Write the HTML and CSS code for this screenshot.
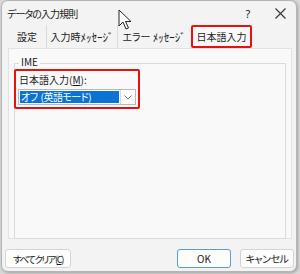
FILE: index.html
```html
<html>
  <head>
    <link rel="stylesheet" href="styles.css">
  </head>
  <body>
    <div class="dialog">
      <div class="titlebar">
        <span class="title">データの入力規則</span>
        <span class="help">?</span>
        <span class="close">
          <svg width="11" height="11" viewBox="0 0 11 11"><path d="M0.5 0.5 L10.5 10.5 M10.5 0.5 L0.5 10.5" stroke="#333" stroke-width="1.1"/></svg>
        </span>
      </div>

      <div class="tabs">
        <div class="tab t1">設定</div>
        <div class="tab t2">入力時<span class="hw">ﾒｯｾｰｼﾞ</span></div>
        <div class="tab t3">エラー&nbsp;<span class="hw">ﾒｯｾｰｼﾞ</span></div>
        <div class="tab active">日本語入力</div>
      </div>

      <div class="panel">
        <div class="group">
          <span class="legend">IME</span>
          <div class="mark">
            <div class="label">日本語入力(<u>M</u>):</div>
            <div class="combo">
              <span class="value">オフ<span class="gap">(英語モード)</span></span>
              <span class="arrow">
                <svg width="8" height="5" viewBox="0 0 8 5"><path d="M0.5 0.5 L4 4 L7.5 0.5" fill="none" stroke="#777" stroke-width="1"/></svg>
              </span>
            </div>
          </div>
        </div>
      </div>

      <div class="buttons">
        <button class="btn clear">すべてクリア(<u>C</u>)</button>
        <span class="spacer"></span>
        <button class="btn ok">OK</button>
        <button class="btn cancel">キャンセル</button>
      </div>
    </div>

    <svg class="cursor" width="16" height="22" viewBox="0 0 16 22">
      <path d="M1 1 L1 17 L5 13 L8 20 L10.5 19 L7.5 12.5 L13 12.5 Z" fill="#fff" stroke="#222" stroke-width="1"/>
    </svg>
  </body>
</html>
```

FILE: styles.css
```css
body {
  margin: 0;
  background-color: #d8d8d8;
  font-family: "Noto Sans CJK JP", "Noto Sans", sans-serif;
  font-feature-settings: "palt";
  font-size: 10px;
  color: #1a1a1a;
  width: 300px;
  height: 274px;
  overflow: hidden;
  white-space: nowrap;
}

.dialog {
  margin-left: 1px;
  width: 296px;
  height: 272px;
  box-sizing: border-box;
  background-color: #f3f3f3;
  border: 1px solid #b4b4b4;
  border-radius: 7px;
  box-shadow: 1px 1px 3px rgba(0, 0, 0, 0.25);
  display: flex;
  flex-direction: column;
}

.titlebar {
  height: 24px;
  flex-shrink: 0;
  display: flex;
  align-items: center;
  padding-left: 5px;
}

.title {
  flex: 1;
  letter-spacing: -0.9px;
}

.help {
  font-family: "Noto Sans", sans-serif;
  font-size: 11px;
  width: 34px;
  text-align: center;
}

.close {
  width: 30px;
  display: flex;
  justify-content: center;
  margin-right: 1px;
}

.tabs {
  display: flex;
  height: 23px;
  flex-shrink: 0;
  padding-left: 6px;
}

.tab {
  display: flex;
  align-items: center;
  justify-content: center;
  border-right: 1px solid #dcdcdc;
  box-sizing: border-box;
}

.hw {
  font-size: 11px;
}

.t1 {
  width: 39px;
}

.t2 {
  width: 71px;
}

.t3 {
  width: 72px;
  border-right: none;
}

.active {
  width: 61px;
  margin-left: 1px;
  border: 2px solid #e81010;
  border-radius: 2px;
  background-color: #f9f9f9;
}

.panel {
  margin: 0 4px 0 6px;
  height: 191px;
  flex-shrink: 0;
  box-sizing: border-box;
  background-color: #f9f9f9;
  border: 1px solid #e2e2e2;
  padding: 14px 5px 0 5px;
}

.group {
  position: relative;
  height: 169px;
  border: 1px solid #dadada;
  padding: 5px 0 0 0;
}

.legend {
  position: absolute;
  top: -9px;
  left: 4px;
  padding: 0 2px;
  background-color: #f9f9f9;
  line-height: 14px;
}

.mark {
  width: 118px;
  border: 2px solid #e81010;
  border-radius: 2px;
  padding: 1px 2px 2px 2px;
  margin-left: -1px;
}

.label {
  margin-left: 1px;
  height: 17px;
  line-height: 16px;
}

.combo {
  display: flex;
  height: 16px;
  box-sizing: border-box;
  border: 1px solid #b8b8b8;
  background-color: #fff;
}

.value {
  flex: 1;
  margin: 1px;
  background-color: #0a73d4;
  color: #fff;
  line-height: 12px;
  padding-left: 1px;
  letter-spacing: -0.5px;
}

.gap {
  margin-left: 3px;
}

.arrow {
  width: 14px;
  display: flex;
  align-items: center;
  justify-content: center;
  border-left: 1px solid #dcdcdc;
}

.buttons {
  display: flex;
  padding: 10px 2px 0 3px;
  gap: 9px;
}

.spacer {
  flex: 1;
}

.btn {
  height: 19px;
  background-color: #fdfdfd;
  border: 1px solid #d4d4d4;
  border-radius: 3px;
  font-family: "Noto Sans CJK JP", "Noto Sans", sans-serif;
  font-feature-settings: "palt";
  font-size: 10px;
  color: #1a1a1a;
  padding: 0;
  width: 54px;
}

.clear {
  width: 66px;
  font-size: 9.5px;
  letter-spacing: -1.5px;
}

.cancel {
  letter-spacing: -0.5px;
}

.ok {
  border-color: #5b9bd5;
}

.cursor {
  position: absolute;
  left: 118px;
  top: 9px;
}
```
